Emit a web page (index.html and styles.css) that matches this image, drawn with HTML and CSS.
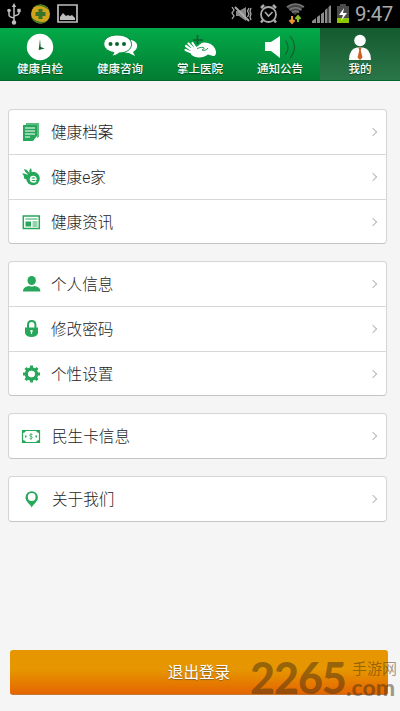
FILE: index.html
```html
<!DOCTYPE html>
<html lang="zh-CN">
<head>
<meta charset="utf-8">
<meta name="viewport" content="width=device-width, initial-scale=1">
<title>我的</title>
<link rel="stylesheet" href="styles.css">
</head>
<body>
<div class="screen">
  <header class="status">
    <svg class="status-left" width="90" height="28" viewBox="0 0 90 28" fill="none" stroke="#bdbdbd">
      <path d="M14 6v15M9 10v5q0 2 5 3M19 10v3q0 2-5 3" stroke-width="1.5"/>
      <path d="M14 3l2.2 4h-4.4z" fill="#bdbdbd" stroke="none"/>
      <circle cx="14" cy="22.5" r="2.2" fill="#bdbdbd" stroke="none"/>
      <circle cx="9" cy="10.5" r="1.8" fill="#bdbdbd" stroke="none"/>
      <path d="M17.3 8.8h3.4v3.4h-3.4z" fill="#bdbdbd" stroke="none"/>
      <circle cx="40.5" cy="14" r="9.5" fill="#d0a51b" stroke="none"/>
      <path d="M34 7a9.5 9.5 0 0 1 15.500 4q-7-7-15.500-4M47 21a9.500 9.500 0 0 1-15.500-4q7 7 15.500 4" fill="#477d28" stroke="none"/>
      <path d="M38.500 9h4v3h3v4h-3v3h-4v-3h-3v-4h3z" fill="#397329" stroke="none"/>
      <path d="M58 5h19v17H58z" stroke-width="1.700"/>
      <path d="M60 20v-3l3-4 3 3 2-1 2 1 2-1 3 3v2z" fill="#bdbdbd" stroke="none"/>
    </svg>
    <div class="status-right">
      <svg width="121" height="28" viewBox="230 0 121 28" fill="none" stroke="#aaa">
        <path d="M236 11h3l7-4v14l-7-5h-3z" fill="#888" stroke="none"/>
        <path d="M235 7l14 14" stroke-width="2"/>
        <path d="M232 7l2 3-2 3 2 3-2 3M249 8l-1.500 3 1.500 3-1.500 3M251 8l-1 3 1 3-1 3 1 3" stroke-width="1.300"/>
        <circle cx="268.500" cy="14.500" r="7.500" stroke-width="1.800"/>
        <path d="M261 8l3-3M276 8l-3-3M263 20l-2 2.500M274 20l2 2.500" stroke-width="2.500"/>
        <path d="M265 12l3.500 4 4-4" stroke-width="1.600"/>
        <path d="M295 15l-8.500-8q8.500-6 17 0z" fill="#444" stroke="none"/>
        <path d="M287 7q8.500-6 17 0M289.500 10q6-4.500 12 0M292 12.500q3.500-2.500 7 0" stroke="#777" stroke-width="1.700"/>
        <path d="M292 16v6M289.500 20l2.500 3 2.500-3" stroke="#ef932e" stroke-width="2"/>
        <path d="M298 22v-5M295.500 19l2.500-3 2.500 3" stroke="#86bd20" stroke-width="2"/>
        <path d="M312 23v-2l4-3v5zM317 23v-6l3-2v8zM321 23v-9l3-2v11zM325 23V10l2.500-2v15zM328.500 23V7l2.500-2v18z" fill="#8b8b8b" stroke="none"/>
        <path d="M337 6h3V4h6v2h3v17h-12z" fill="#4b4b4b" stroke="none"/>
        <path d="M337 18h12v5h-12z" fill="#8bc700" stroke="none"/>
        <path d="M344 8l-5 7h4l-2 6 6-8h-4z" fill="#fff" stroke="none"/>
      </svg>
      <span class="clock">9:47</span>
    </div>
  </header>

  <nav class="tabs">
    <a class="tab">
      <svg width="80" height="34" viewBox="0 0 80 34"><circle cx="40" cy="19" r="13.200" fill="#fff"/><path d="M40 11l-1.300 11 6-1.500-4-1.500z" fill="#12602c"/></svg>
      <span>健康自检</span>
    </a>
    <a class="tab">
      <svg width="80" height="34" viewBox="0 0 80 34" fill="#fff"><path d="M49 12c9 0 11 8 4 12l2 4-6-3c-4 0-6-1-8-3z"/><path d="M37 7c19 0 19 18 2 18-2 2-5 3-7 3l2-3.500C19 22 21 7 37 7z" stroke="#098f3d"/><g fill="#08672c"><circle cx="30.500" cy="16" r="2"/><circle cx="37" cy="16" r="2"/><circle cx="44" cy="16" r="2"/></g></svg>
      <span>健康咨询</span>
    </a>
    <a class="tab">
      <svg width="80" height="34" viewBox="0 0 80 34"><path d="M37.500 7v9M33 12h10" stroke="#126034" stroke-width="1.700"/><path d="M26 18l7 5M28.500 15.500l6 6M32.500 15l4 6M25.500 22l7 3" stroke="#fff" stroke-width="2.200" stroke-linecap="round"/><path d="M31 20l5-1c3-1 4-4 8-4.500 7 0 11 4 12 9 .3 3-1 5-3 4.500l-5-1.500c-5 4-13 4-17 0z" fill="#fff"/><path d="M37 20.500c2-.5 4-1.500 6-1 2 0 1 2-1 2.500 3 1 5-.5 6-2" stroke="#07923b" stroke-width=".9" fill="none"/></svg>
      <span>掌上医院</span>
    </a>
    <a class="tab">
      <svg width="80" height="34" viewBox="0 0 80 34"><path d="M25 14h6l9-6v22l-9-7h-6z" fill="#fff"/><path d="M45.500 12.500q5 7 0 14M50 8q9 11 0 22" stroke="#12602e" stroke-width="1.100" fill="none"/></svg>
      <span>通知公告</span>
    </a>
    <a class="tab tab-active">
      <svg width="80" height="34" viewBox="0 0 80 34"><circle cx="40" cy="12.500" r="5.800" fill="#fff"/><path d="M29 32q0-11 8-12.500h6q8 1.500 8 12.500z" fill="#fff"/><path d="M38.500 19.500h3l-.7 3 1.700 7-2.500 2.500-2.500-2.500 1.700-7z" fill="#cd6125"/></svg>
      <span>我的</span>
    </a>
  </nav>

  <main class="content">
    <section class="card">
      <a class="row"><svg class="icon" viewBox="0 0 20 20"><path d="M5 1h13v14l-2 1V3H5z" fill="#5abc80"/><path d="M2 3h14v11l-4 5H2z" fill="#27a75a"/><path d="M4 6h10M4 9h10M4 12h10M4 15h5" stroke="#fff" stroke-width="1.100"/></svg><span>健康档案</span><i class="chevron"></i></a>
      <a class="row"><svg class="icon" viewBox="0 0 20 20"><circle cx="12" cy="11.500" r="6.800" fill="#27a75a"/><path d="M1 6.500q5-.5 8 4l-2 2q-5 0-4-3.500zM3 2q5 1 5.500 6Q4 6 3 2zM8.500 7q-1-4 1.500-6 1.500 3 0 6z" fill="#27a75a"/><path d="M9 12.200h6c0-4-5.500-3.500-5.500 0 0 3 4 3.500 5.500 1.500" fill="none" stroke="#fff" stroke-width="1.500"/></svg><span>健康e家</span><i class="chevron"></i></a>
      <a class="row"><svg class="icon" viewBox="0 0 20 20"><path d="M2.300 4h16v12.500h-16z" fill="none" stroke="#27a75a" stroke-width="1.500"/><path d="M4.500 7h12M11.500 10h5M11.500 12h5M11.500 14h5" stroke="#27a75a"/><path d="M4.500 9.500h5.500v5H4.500z" fill="#27a75a"/></svg><span>健康资讯</span><i class="chevron"></i></a>
    </section>
    <section class="card">
      <a class="row"><svg class="icon" viewBox="0 0 20 20" fill="#27a75a"><ellipse cx="10.700" cy="6.500" rx="4.200" ry="4.500"/><path d="M2 17.500c0-4 3-5 6-5.500q2.700 1.200 5.400 0c3 .5 6 1.500 6 5.500z"/></svg><span>个人信息</span><i class="chevron"></i></a>
      <a class="row"><svg class="icon" viewBox="0 0 20 20"><path d="M7 9V6q0-4 3.700-4t3.700 4v3" fill="none" stroke="#27a75a" stroke-width="2"/><path d="M4 8.500h13V14q-1 4-6.500 4T4 14z" fill="#27a75a"/><path d="M10.500 11v4M9 12h3" stroke="#fff" stroke-width="1.200"/></svg><span>修改密码</span><i class="chevron"></i></a>
      <a class="row"><svg class="icon" viewBox="0 0 20 20"><circle cx="10.500" cy="10" r="5" fill="none" stroke="#27a75a" stroke-width="3.500"/><path d="M10.500 1.500v4M10.500 14.500v4M2 10h4M15 10h4M4.500 4l3 3M13.500 13l3 3M4.500 16l3-3M13.500 7l3-3" stroke="#27a75a" stroke-width="3"/><circle cx="10.500" cy="10" r="3.300" fill="#fff"/></svg><span>个性设置</span><i class="chevron"></i></a>
    </section>
    <section class="card card-single">
      <a class="row"><svg class="icon" viewBox="0 0 20 20"><path d="M1.500 4.500h17v12h-17z" fill="none" stroke="#27a75a" stroke-width="1.200"/><path d="M1 4h4q0 3-4 3zM19 4h-4q0 3 4 3zM1 17h4q0-3-4-3zM19 17h-4q0-3 4-3zM4 9.500h1.500v2H4zM14.500 9.500H16v2h-1.500z" fill="#27a75a"/><path d="M11.500 8.500q-3-1-3 .7c0 1.300 3 1 3 2.500q0 1.500-3 .5M10 7v7" fill="none" stroke="#27a75a" stroke-width=".7"/></svg><span>民生卡信息</span><i class="chevron"></i></a>
    </section>
    <section class="card card-single">
      <a class="row"><svg class="icon" viewBox="0 0 20 20"><path d="M4.500 8.500a6.200 6.200 0 0 1 12.400 0c0 4-4 6-6.200 10-2-4-6.200-6-6.200-10z" fill="#27a75a"/><circle cx="10.700" cy="8" r="3.900" fill="#fff"/></svg><span>关于我们</span><i class="chevron"></i></a>
    </section>
  </main>

  <footer class="footer">
    <button class="logout">退出登录</button>
    <div class="watermark">
      <span class="wm-number">2265</span>
      <span class="wm-side"><span class="wm-cn">手游网</span><span class="wm-com">.com</span></span>
    </div>
  </footer>
</div>
</body>
</html>
```
FILE: styles.css
```css
* { box-sizing: border-box; }

body {
  margin: 0;
  font-family: Roboto, "Noto Sans CJK SC", sans-serif;
}

.screen {
  width: 400px;
  height: 711px;
  display: flex;
  flex-direction: column;
  background: #f5f5f5;
  overflow: hidden;
}

.status {
  height: 28px;
  display: flex;
  justify-content: space-between;
  background: #000;
}

.status-right { display: flex; padding-right: 6px; gap: 4px; }

.clock {
  width: 39px;
  color: #aaa;
  font-size: 20.5px;
  line-height: 28px;
  letter-spacing: -0.4px;
  white-space: nowrap;
}

.tabs {
  height: 53px;
  display: grid;
  grid-template-columns: repeat(5, 80px);
  background: linear-gradient(#02aa48, #037c32);
  border-bottom: 1px solid #02642b;
}

.tab {
  display: flex;
  flex-direction: column;
  align-items: center;
  color: #fff;
  font-size: 11.5px;
  font-weight: 500;
  line-height: 14px;
  text-shadow: 0 1px 1px #07491f;
}

.tab-active { background: linear-gradient(#145a2f, #2b7649); }

.content {
  display: flex;
  flex-direction: column;
  gap: 17px;
  padding: 28px 13px 0 8px;
}

.card {
  height: 135px;
  display: flex;
  flex-direction: column;
  border: 1px solid #d5d5d5;
  border-bottom-color: #c5c5c5;
  border-radius: 4px;
  background: #fff;
}

.card-single { height: 46px; }

.row {
  height: 44px;
  display: flex;
  align-items: center;
  padding: 0 10px 0 12px;
  color: #222;
  font-size: 15.6px;
  font-weight: 300;
  line-height: 22px;
}

.row + .row { height: 45px; border-top: 1px solid #d8d8d8; }
.row + .row + .row { height: 44px; padding-top: 1px; }
.row span { padding-top: 2px; }
.icon { width: 20px; height: 20px; margin-right: 10px; }
.card-single span { margin-left: 1px; }

.chevron {
  width: 6px;
  height: 6px;
  margin-left: auto;
  border: solid #b8b8b8;
  border-width: 1.5px 1.5px 0 0;
  transform: rotate(45deg);
}

.footer {
  position: relative;
  margin-top: auto;
  padding: 0 12px 16px 10px;
}

.logout {
  display: block;
  width: 100%;
  height: 45px;
  padding: 0 0 2px;
  border: 0;
  border-bottom: 1px solid #c67732;
  border-radius: 3px;
  background: linear-gradient(#e69600 45%, #e56500);
  color: #fff;
  font: 400 15.6px "Noto Sans CJK SC", sans-serif;
  text-shadow: 0 1px 1px #91601b;
}

.watermark {
  position: absolute;
  top: 9px;
  left: 250px;
  display: flex;
  color: rgba(65, 45, 20, .48);
}

.wm-number {
  width: 96px;
  font: 900 43px/38px Lato, sans-serif;
  letter-spacing: -1px;
}

.wm-side { display: flex; flex-direction: column; padding-top: 3px; }
.wm-cn { padding-left: 6px; font-size: 15px; font-weight: 400; line-height: 15px; }
.wm-com {
  margin-top: 2px;
  font: 900 23px/16px Lato, sans-serif;
}
```
